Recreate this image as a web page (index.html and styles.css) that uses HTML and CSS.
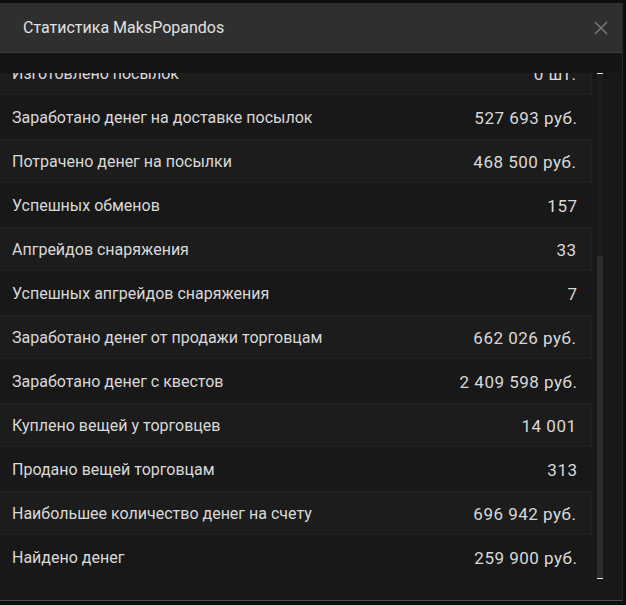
FILE: index.html
```html
<!DOCTYPE html>
<html lang="ru">
<head>
  <meta charset="UTF-8">
  <title>Статистика MaksPopandos</title>
  <link rel="stylesheet" href="styles.css">
</head>
<body>
  <div class="window">
    <div class="header">
      <span class="title">Статистика MaksPopandos</span>
      <button class="close" title="Закрыть">
        <svg width="14" height="14" viewBox="0 0 14 14">
          <path d="M1 1 L13 13 M13 1 L1 13" stroke="#808080" stroke-width="1.3" fill="none"/>
        </svg>
      </button>
    </div>
    <div class="body">
      <div class="stats" id="stats">
        <div class="row"><span>Сыграно рейдов</span><span class="value">412</span></div>
        <div class="row"><span>Выжито рейдов</span><span class="value">187</span></div>
        <div class="row"><span>Убито ЧВК</span><span class="value">356</span></div>
        <div class="row"><span>Убито Диких</span><span class="value">1 204</span></div>
        <div class="row"><span>Выполнено заданий</span><span class="value">96</span></div>
        <div class="row"><span>Собрано предметов</span><span class="value">2 871</span></div>
        <div class="row"><span>Изготовлено посылок</span><span class="value">0 шт.</span></div>
        <div class="row"><span>Заработано денег на доставке посылок</span><span class="value">527 693 руб.</span></div>
        <div class="row"><span>Потрачено денег на посылки</span><span class="value">468 500 руб.</span></div>
        <div class="row"><span>Успешных обменов</span><span class="value">157</span></div>
        <div class="row"><span>Апгрейдов снаряжения</span><span class="value">33</span></div>
        <div class="row"><span>Успешных апгрейдов снаряжения</span><span class="value">7</span></div>
        <div class="row"><span>Заработано денег от продажи торговцам</span><span class="value">662 026 руб.</span></div>
        <div class="row"><span>Заработано денег с квестов</span><span class="value">2 409 598 руб.</span></div>
        <div class="row"><span>Куплено вещей у торговцев</span><span class="value">14 001</span></div>
        <div class="row"><span>Продано вещей торговцам</span><span class="value">313</span></div>
        <div class="row"><span>Наибольшее количество денег на счету</span><span class="value">696 942 руб.</span></div>
        <div class="row"><span>Найдено денег</span><span class="value">259 900 руб.</span></div>
      </div>
      <div class="scrollbar"><div class="thumb" id="thumb"></div></div>
    </div>
  </div>

  <script>
    // список открыт прокрученным до конца
    var stats = document.getElementById("stats");
    stats.scrollTop = stats.scrollHeight;
    var track = stats.clientHeight - 2;
    document.getElementById("thumb").style.height =
      Math.round(track * stats.clientHeight / stats.scrollHeight) + "px";
  </script>
</body>
</html>
```

FILE: styles.css
```css
body {
  margin: 0;
  background-color: #0e0e0e;
  font-family: Roboto, "Liberation Sans", sans-serif;
  color: #d9d9d9;
}
.window {
  width: 623px;
  height: 598px;
  margin-top: 3px;
  box-sizing: border-box;
  background-color: #181818;
  border-right: 1px solid #262626;
  border-bottom: 1px solid #4d4d4d;
}
.header {
  height: 49px;
  background-color: #2f2f2f;
  border-bottom: 1px solid #3b3b3b;
  display: flex;
  align-items: center;
  justify-content: space-between;
  padding: 0 14px 0 23px;
}
.title {
  font-size: 16px;
  color: #e0e0e0;
}
.close {
  background: none;
  border: none;
  padding: 0;
  cursor: pointer;
  display: flex;
}
.body {
  border-top: 20px solid #151515;
  padding: 0 19px 21px 0;
  display: flex;
  gap: 5px;
}
.stats {
  flex: 1;
  height: 506px;
  overflow: hidden;
}
.scrollbar {
  width: 6px;
  height: 506px;
  box-sizing: border-box;
  background-color: #1c1c1c;
  border-top: 1px solid #e6e6e6;
  border-bottom: 1px solid #e6e6e6;
  display: flex;
  flex-direction: column;
  justify-content: flex-end;
}
.thumb {
  background-color: #2c2c2c;
}
.row {
  height: 44px;
  box-sizing: border-box;
  padding: 1px 15px 0 12px;
  display: flex;
  align-items: center;
  justify-content: space-between;
  font-size: 16px;
}
.row:nth-child(odd) {
  background-color: #1c1c1c;
  border: 1px solid #222222;
  border-left: none;
}
.value {
  font-size: 17px;
  letter-spacing: 0.5px;
  margin-right: -0.5px;
}
```
